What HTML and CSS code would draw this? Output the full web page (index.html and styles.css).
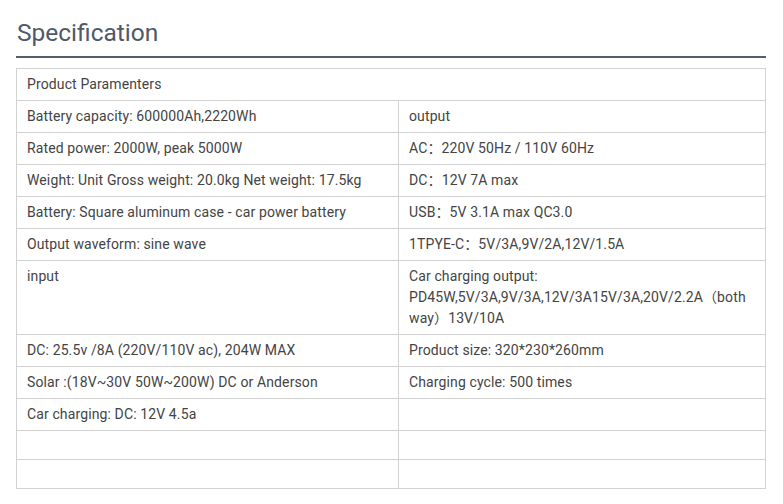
FILE: index.html
```html
<!DOCTYPE html>
<html lang="en">
<head>
<meta charset="utf-8">
<title>Specification</title>
<link rel="stylesheet" href="styles.css">
</head>
<body>
<div class="page">
  <h2 class="title">Specification</h2>
  <table class="spec">
    <colgroup>
      <col class="col-left">
      <col class="col-right">
    </colgroup>
    <tbody>
      <tr><td colspan="2">Product Paramenters</td></tr>
      <tr><td>Battery capacity: 600000Ah,2220Wh</td><td>output</td></tr>
      <tr><td>Rated power: 2000W, peak 5000W</td><td>AC：220V 50Hz / 110V 60Hz</td></tr>
      <tr><td>Weight: Unit Gross weight: 20.0kg Net weight: 17.5kg</td><td>DC：12V 7A max</td></tr>
      <tr><td>Battery: Square aluminum case - car power battery</td><td>USB：5V 3.1A max QC3.0</td></tr>
      <tr><td>Output waveform: sine wave</td><td>1TPYE-C：5V/3A,9V/2A,12V/1.5A</td></tr>
      <tr><td>input</td><td>Car charging output:<br>PD45W,5V/3A,9V/3A,12V/3A15V/3A,20V/2.2A（both way）13V/10A</td></tr>
      <tr><td>DC: 25.5v /8A (220V/110V ac), 204W MAX</td><td>Product size: 320*230*260mm</td></tr>
      <tr><td>Solar :(18V~30V 50W~200W) DC or Anderson</td><td>Charging cycle: 500 times</td></tr>
      <tr><td>Car charging: DC: 12V 4.5a</td><td></td></tr>
      <tr class="empty"><td>&nbsp;</td><td>&nbsp;</td></tr>
      <tr class="empty"><td>&nbsp;</td><td>&nbsp;</td></tr>
    </tbody>
  </table>
</div>
</body>
</html>
```
FILE: styles.css
```css
html, body {
  margin: 0;
  padding: 0;
  background: #ffffff;
}

body {
  font-family: Roboto, "Noto Sans CJK SC", "Liberation Sans", sans-serif;
  color: #444444;
}

.page {
  width: 750px;
  margin-left: 16px;
}

.title {
  margin: 0;
  padding: 18px 0 8px 1px;
  font-size: 24.5px;
  line-height: 30px;
  font-weight: 400;
  color: #4f5969;
  border-bottom: 2px solid #555e6c;
}

.spec {
  margin-top: 10px;
  width: 750px;
  border-collapse: collapse;
  table-layout: fixed;
  font-size: 14px;
  line-height: 21px;
  letter-spacing: 0.12px;
}

.col-left {
  width: 382px;
}

.spec td {
  border: 1px solid #d2d2d2;
  padding: 5px 10px;
  vertical-align: top;
}

.spec .empty td {
  line-height: 18px;
}
```
